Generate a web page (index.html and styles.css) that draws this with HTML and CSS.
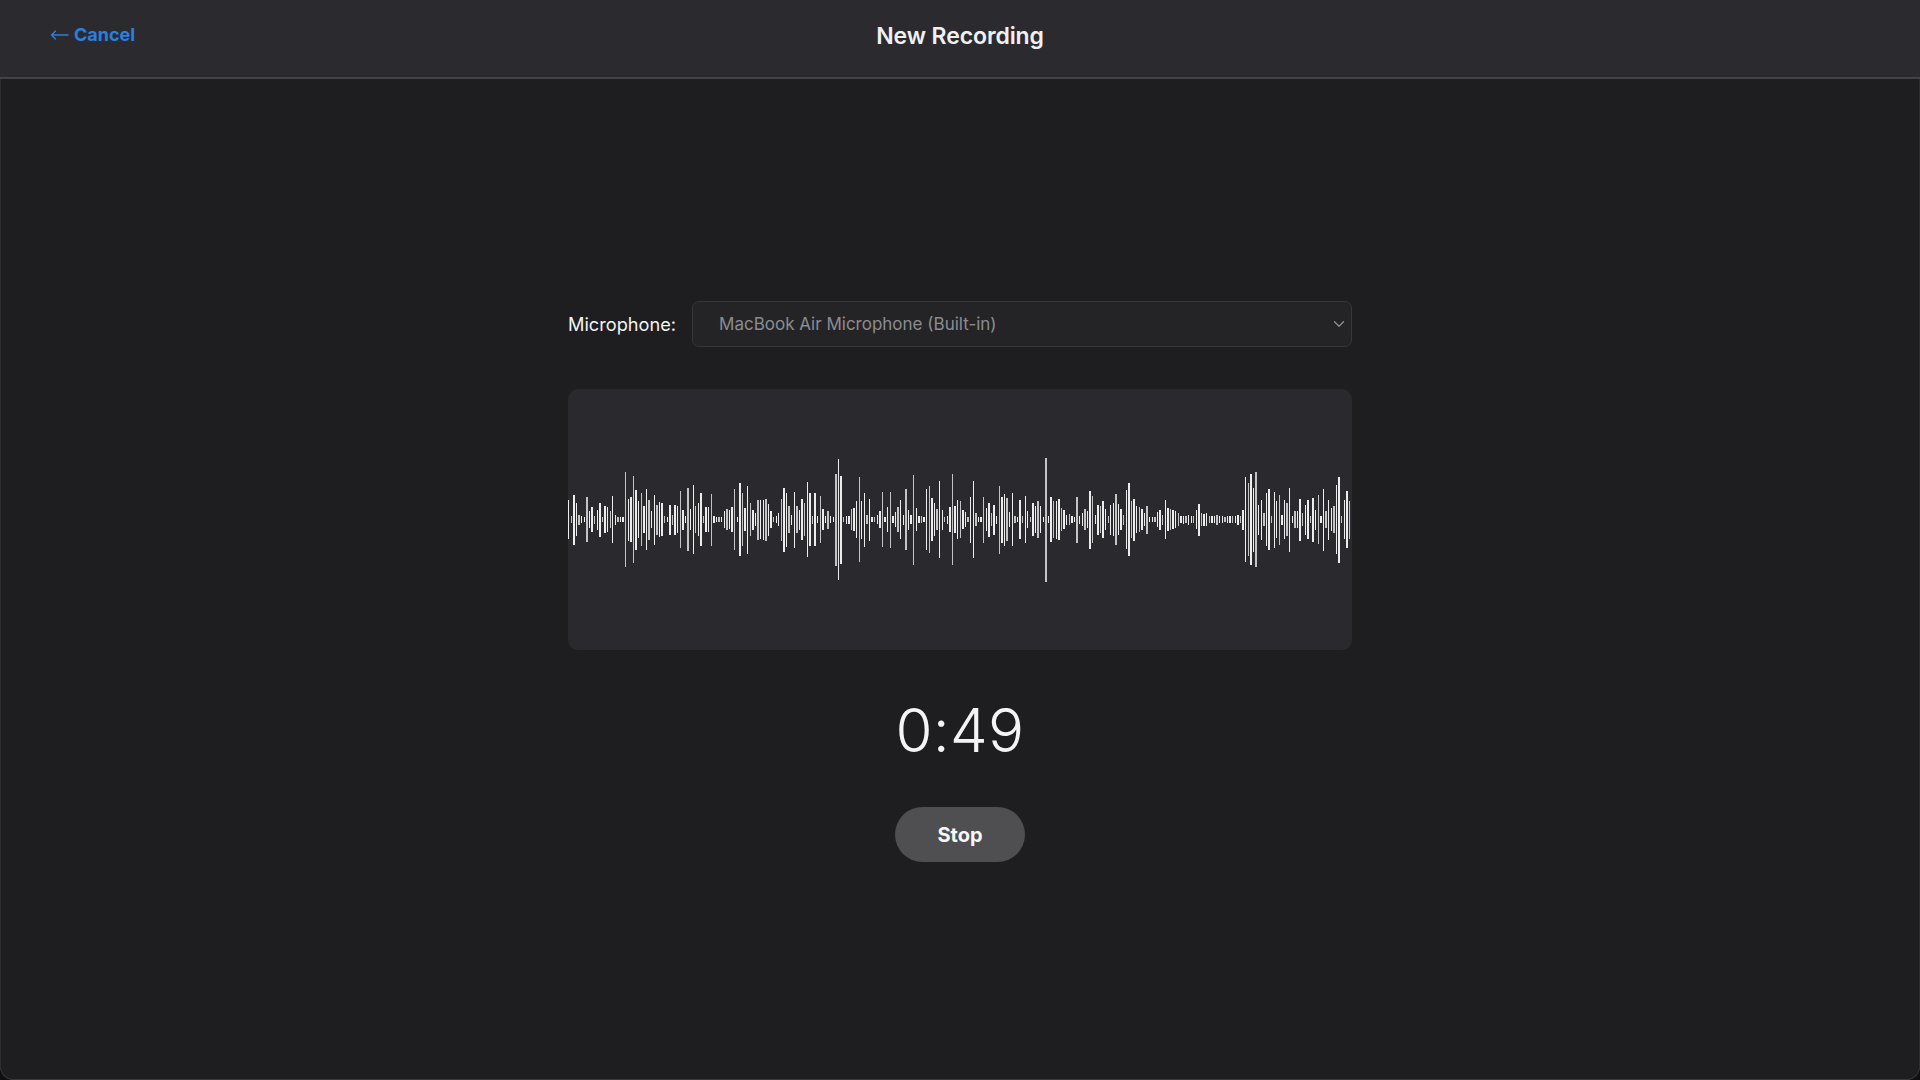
FILE: index.html
```html
<!DOCTYPE html>
<html lang="en">
<head>
    <meta charset="UTF-8">
    <meta name="viewport" content="width=device-width, initial-scale=1.0">
    <title>New Recording</title>
    <link rel="stylesheet" href="styles.css">
</head>
<body>
    <div class="app">
        <header class="topbar">
            <a class="back-link" href="#">
                <svg class="back-arrow" width="19" height="10" viewBox="0 0 19 10"><path d="M18 5 H1.5 M5.5 1 L1.5 5 L5.5 9" fill="none" stroke="#2a7fe0" stroke-width="1.4" stroke-linecap="round" stroke-linejoin="round"/></svg>
                Cancel
            </a>
            <h1 class="topbar-title">New Recording</h1>
            <span></span>
        </header>

        <main class="recorder">
            <div class="mic-row">
                <label for="mic-select">Microphone:</label>
                <div class="select-wrap">
                    <select id="mic-select" disabled>
                        <option>MacBook Air Microphone (Built-in)</option>
                    </select>
                    <svg class="select-chevron" width="12" height="8" viewBox="0 0 12 8"><path d="M1.5 1.8 L6 6.2 L10.5 1.8" fill="none" stroke="#8e8e93" stroke-width="1.3" stroke-linecap="round" stroke-linejoin="round"/></svg>
                </div>
            </div>

            <div class="wave-panel">
                <div class="wave" id="wave"></div>
            </div>

            <div class="timer">0:49</div>

            <button type="button" class="stop-btn">Stop</button>
        </main>
    </div>

    <script>
        var levels = [
            39, 7, 50, 33, 10, 7, 5, 45, 17, 25, 8, 20, 34, 5, 27, 25, 17, 47, 10, 5, 5, 5, 95, 42, 45, 87, 60, 37, 53, 27,
            61, 40, 17, 50, 30, 35, 33, 7, 5, 30, 10, 30, 27, 57, 20, 7, 63, 21, 69, 27, 33, 53, 7, 25, 25, 52, 7, 5, 5, 5,
            17, 21, 19, 25, 61, 5, 73, 53, 23, 68, 33, 20, 13, 40, 39,
            40, 42, 32, 17, 5, 7, 13, 42, 64, 54, 27, 10, 56, 27, 20, 41, 33, 75, 53, 8, 53, 7, 47, 21, 7, 18, 7, 5, 92, 121,
            88, 5, 8, 8, 21, 23, 37, 85, 38, 54, 9, 42, 5, 5, 9, 17, 55, 5, 25, 56, 7, 15, 25, 39, 10, 61, 20, 9, 90, 23,
            7, 7, 5, 61, 67, 43, 33, 21, 77, 20, 5, 8, 25, 91, 27, 39,
            37, 19, 15, 5, 46, 77, 13, 5, 5, 46, 23, 34, 13, 30, 8, 68, 46, 52, 43, 15, 53, 7, 5, 39, 7, 47, 17, 5, 33, 27,
            37, 27, 5, 124, 7, 45, 37, 38, 41, 23, 19, 10, 11, 7, 5, 46, 8, 13, 21, 17, 58, 47, 9, 30, 27, 37, 21, 7, 30, 33,
            51, 31, 21, 10, 59, 73, 37, 42, 27, 25, 21, 13, 28, 5, 5, 5, 15,
            20, 10, 39, 23, 21, 19, 17, 13, 7, 8, 7, 10, 7, 7, 19, 32, 13, 12, 13, 7, 7, 7, 10, 7, 7, 5, 7, 7, 7, 7,
            10, 7, 20, 85, 73, 91, 64, 95, 30, 40, 13, 53, 61, 7, 56, 37, 50, 10, 39, 33, 64, 7, 17, 17, 42, 13, 30, 39, 7, 44,
            20, 49, 7, 62, 17, 40, 23, 27, 69, 86, 7, 39, 57, 38
        ];

        var wave = document.getElementById('wave');
        levels.forEach(function(h, i) {
            var bar = document.createElement('span');
            bar.className = 'bar' + (i % 3 === 1 ? ' bar-dim' : '');
            bar.style.height = h + 'px';
            wave.appendChild(bar);
        });
    </script>
</body>
</html>
```

FILE: styles.css
```css
html {
    background-color: #101012;
}
body {
    margin: 0;
    font-family: Inter, "Liberation Sans", Arial, sans-serif;
    color: #ececee;
}
.app {
    min-height: 100vh;
    box-sizing: border-box;
    background-color: #1e1e20;
    border-radius: 0 0 14px 14px;
    box-shadow: inset 0 -1px 0 #3a3a3c, inset 1px 0 0 #2e2e30, inset -1px 0 0 #2e2e30;
    display: flex;
    flex-direction: column;
}
.topbar {
    box-sizing: border-box;
    height: 79px;
    background-color: #2b2b2f;
    border-bottom: 2px solid #444447;
    display: grid;
    grid-template-columns: 1fr auto 1fr;
    align-items: center;
    padding: 0 50px 6px;
}
.back-link {
    justify-self: start;
    display: flex;
    align-items: center;
    gap: 5px;
    color: #2a7fe0;
    text-decoration: none;
    font-size: 18px;
    font-weight: 700;
    margin-top: -3px;
}
.back-arrow {
    margin-top: 2px;
}
.topbar-title {
    margin: 0;
    font-size: 23px;
    font-weight: 600;
    color: #f0f0f2;
    letter-spacing: -0.1px;
}
.recorder {
    width: 784px;
    margin: 0 auto;
    padding-top: 222px;
    display: flex;
    flex-direction: column;
    align-items: center;
}
.mic-row {
    width: 100%;
    display: flex;
    align-items: center;
    gap: 16px;
}
.mic-row label {
    font-size: 18.2px;
    color: #f2f2f4;
    white-space: nowrap;
}
.select-wrap {
    position: relative;
    flex: 1;
}
.select-wrap select {
    width: 100%;
    height: 46px;
    appearance: none;
    -webkit-appearance: none;
    background-color: #242427;
    border: 1px solid #37373a;
    border-radius: 7px;
    padding: 0 26px;
    font-family: inherit;
    font-size: 17px;
    color: #8c8c90;
    opacity: 1;
}
.select-chevron {
    position: absolute;
    right: 7px;
    top: 19px;
}
.wave-panel {
    width: 100%;
    height: 261px;
    margin-top: 42px;
    background-color: #2a2a2e;
    border-radius: 10px;
    display: flex;
    align-items: center;
}
.wave {
    width: 100%;
    height: 130px;
    display: flex;
    align-items: center;
    justify-content: space-between;
}
.bar {
    width: 1.4px;
    background-color: #ececec;
}
.bar-dim {
    background-color: #c4c4c6;
}
.timer {
    margin-top: 40px;
    font-size: 60px;
    font-weight: 300;
    color: #f4f4f6;
    line-height: 80px;
    letter-spacing: 0.3px;
}
.stop-btn {
    margin-top: 37px;
    width: 130px;
    height: 55px;
    border: none;
    border-radius: 28px;
    background-color: #4f4f51;
    color: #f6f6f8;
    font-family: inherit;
    font-size: 20px;
    font-weight: 700;
    cursor: pointer;
}
.stop-btn:hover {
    background-color: #5a5a5c;
}
```
